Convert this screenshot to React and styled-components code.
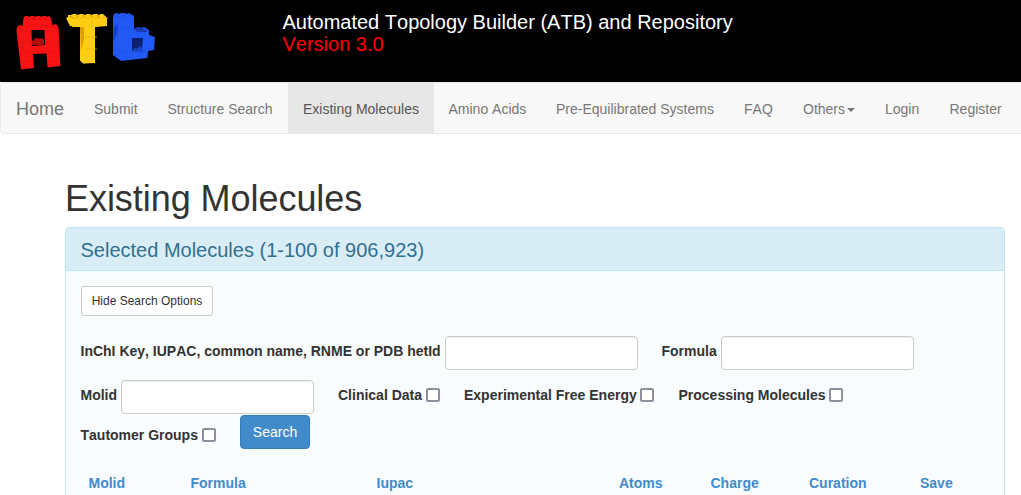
import React from "react";
import styled, { createGlobalStyle } from "styled-components";

const Global = createGlobalStyle`
  *, *::before, *::after { box-sizing: border-box; }
  html, body { margin: 0; overflow: hidden; background: #fff; }
  body { font: 14px/20px "Liberation Sans", Arial, sans-serif; color: #333; font-kerning: none; }
`;
const Page = styled.div`height: 495px; overflow: hidden;`;
const Banner = styled.header`display: flex; height: 82px; background: #000;`;
const Logo = styled.svg`display: block; width: 170px; height: 82px; flex: none;`;
const BannerText = styled.div`
  padding: 11px 0 0 112.5px; font-size: 20px; line-height: 22px; color: #fff; white-space: nowrap;
`;
const Version = styled.div`color: #f00;`;
const Navbar = styled.nav`
  display: flex; width: 1030px; height: 52px; background: #f8f8f8;
  border: 1px solid #e7e7e7; border-radius: 4px;
`;
const NavLink = styled.a`
  display: flex; align-items: center; flex: none; width: ${(p) => p.$width}px;
  padding: 2px 0 0 15px; white-space: nowrap; font-size: ${(p) => (p.$brand ? 18 : 14)}px;
  color: ${(p) => (p.$active ? "#555" : "#777")};
  background: ${(p) => (p.$active ? "#e7e7e7" : "transparent")};
`;
const Caret = styled.span`
  margin: 1px 0 0 2px;
  border-top: 4px solid; border-left: 4px solid transparent; border-right: 4px solid transparent;
`;
const Main = styled.main`width: 940px; margin-left: 65px; padding-top: 45px;`;
const Title = styled.h1`
  margin: 0 0 9px; font-size: 36px; line-height: 39px; font-weight: 400; letter-spacing: -0.05px;
`;
const Panel = styled.section`
  height: 400px; background: #f9fcfd; border: 1px solid #bce8f1; border-radius: 4px;
  box-shadow: 0 1px 1px rgba(0, 0, 0, 0.05);
`;
const PanelHeading = styled.h2`
  margin: 0; height: 43px; padding: 11px 14.5px 10px; font-size: 20px; line-height: 22px;
  font-weight: 400; color: #31708f; background: #d9edf7; border-bottom: 1px solid #bce8f1;
  border-radius: 3px 3px 0 0;
`;
const PanelBody = styled.div`padding: 15px 14px;`;
const Button = styled.button`
  display: block; font-family: inherit; font-kerning: none; white-space: nowrap; text-align: center;
  width: ${(p) => (p.$primary ? 70 : 132)}px; height: ${(p) => (p.$primary ? 34 : 30)}px; padding: 0;
  font-size: ${(p) => (p.$primary ? 14 : 12)}px; border-radius: ${(p) => (p.$primary ? 4 : 3)}px;
  color: ${(p) => (p.$primary ? "#fff" : "#333")};
  background: ${(p) => (p.$primary ? "#428bca" : "#fff")};
  border: 1px solid ${(p) => (p.$primary ? "#357ebd" : "#ccc")};
`;
const ToggleRow = styled.div`padding-left: 1px; margin-bottom: 20px;`;
const FormRow = styled.div`
  display: flex; align-items: ${(p) => (p.$top ? "flex-start" : "center")};
  height: 34px; margin-bottom: ${(p) => p.$gap || 0}px;
`;
const Field = styled.label`
  display: flex; align-items: center; flex: none; width: ${(p) => p.$width}px;
  height: ${(p) => p.$height || 34}px; font-weight: 700; white-space: nowrap;
`;
const Caption = styled.span`
  flex: none; width: ${(p) => p.$width}px; padding: 0 0 4px ${(p) => (p.$flush ? 0 : 0.5)}px;
`;
const TextInput = styled.input`
  width: 193px; height: 34px; padding: 6px 12px; border: 1px solid #ccc; border-radius: 4px;
  background: #fff; box-shadow: inset 0 1px 1px rgba(0, 0, 0, 0.075);
`;
const Checkbox = styled.input.attrs({ type: "checkbox" })`
  appearance: none; width: 14px; height: 14px; margin: 0 0 4px; background: #fff;
  border: 2px solid #8f8f9d; border-radius: 2px;
`;
const TableHead = styled.div`
  display: grid; grid-template-columns: 102px 186px 242.5px 91.5px 98.5px 111px 60px;
  padding-left: 8.5px; margin-top: 24px; font-weight: 700; color: #428bca;
`;

const Check = ({ text, captionWidth, width, height, flush }) => (
  <Field $width={width} $height={height}>
    <Caption $width={captionWidth} $flush={flush}>{text}</Caption>
    <Checkbox />
  </Field>
);

const BrickLogo = () => (
  <Logo viewBox="0 0 170 82" role="img" aria-label="ATB">
    <path fill="#f81414" d="M16.500 31L17 27L20 25L22.500 26L23.500 18L25 16H28L29 17L31 16H34L35 17L37 16H40L41 17L43 16H46L47 17L49 16L51 18L52.500 26L54 24L57 25L58.500 28L60.500 66L47.500 67.500L46.500 53.500L33 54L34 68L21 69.500Z" />
    <path fill="#000" d="M31.500 30h13l.5 15-13 1z" />
    <path fill="#b80909" d="M32 45v-4l2-1 1-2h3l1 1 3-1 2 2v5z" />
    <path fill="none" stroke="#e80e0e" strokeWidth=".7" d="M23 26h28M17 32h14M45 31h14M18 42h14M46 42h13M19 52h39M39 45v8M20 61h13M47 61h13" />
    <path fill="none" stroke="#bd0808" strokeWidth=".8" d="M26 18l3 2M32 18l3 2M38 18l3 2M44 18l3 2M18 28l3 2M54 27l3 2" />
    <path fill="#e5aa09" d="M68 16l4 9v2h8v33l5 4V27h12v-1H72z" />
    <path fill="#ffcd12" d="M68 17v-2h3l2-1h3l2 1 2-1h3l2 1 2-1h3l2 1 2-1h3l2 1 2-1h2l2 2 2 2v8l-12 1v36l-12 .5-3-3V27l-10-1-4-8z" />
    <path fill="#df9e0c" d="M80 27h4v13l-3 10z" />
    <path fill="none" stroke="#e9b10d" strokeWidth=".7" d="M73 18h35M92 19v8M85 37h12M85 49h12" />
    <path fill="none" stroke="#b88408" strokeWidth=".9" d="M70 16l3 2M76 15l2 2M83 15l2 2M90 15l2 2M97 15l2 2M104 15l2 2" />
    <path fill="#2258f4" d="M113 17l1-3 3-1 2 1 2-1h4l2 1 2-1 5 3v13l4-2 3 1 3-1 5 3v5l6 2-1 13-6 1-.5 7-26.500 3-8-6z" />
    <path fill="#1840bd" d="M114 27l4-3-1 10-4 8z" />
    <path fill="#173bb1" d="M134 29l3-2 5 1 6 3-1 1h-10z" />
    <path fill="#0a226f" d="M132 38h11l-1 11-2-1-2 3-6 1z" />
    <path fill="#1748cb" d="M132 51l3-3 2 1 3-3 3 3v3h-11z" />
    <path fill="none" stroke="#1d50e8" strokeWidth=".7" d="M114 16l7 2h13M120 28h13M120 40h12M119 52h29" />
    <path fill="none" stroke="#1744bd" strokeWidth=".8" d="M116 14l3 2M122 14l3 2M128 14l3 2" />
  </Logo>
);

const links = [
  ["Submit", 73.5], ["Structure Search", 135.5], ["Existing Molecules", 145.5],
  ["Amino Acids", 107.5], ["Pre-Equilibrated Systems", 188], ["FAQ", 59],
  ["Others", 82], ["Login", 64.5], ["Register", 82],
];

export default function App() {
  return (
    <Page>
      <Global />
      <Banner>
        <BrickLogo />
        <BannerText>Automated Topology Builder (ATB) and Repository<Version>Version 3.0</Version></BannerText>
      </Banner>
      <Navbar>
        <NavLink $brand $width={78}>Home</NavLink>
        {links.map(([name, width]) => (
          <NavLink key={name} $width={width} $active={name === "Existing Molecules"}>
            {name}{name === "Others" && <Caret />}
          </NavLink>
        ))}
      </Navbar>
      <Main>
        <Title>Existing Molecules</Title>
        <Panel>
          <PanelHeading>Selected Molecules (1-100 of 906,923)</PanelHeading>
          <PanelBody>
            <ToggleRow><Button>Hide Search Options</Button></ToggleRow>
            <FormRow $gap={10}>
              <Field $width={581}><Caption $width={365}>InChI Key, IUPAC, common name, RNME or PDB hetId</Caption><TextInput /></Field>
              <Field $width={260}><Caption $width={60}>Formula</Caption><TextInput /></Field>
            </FormRow>
            <FormRow $gap={1}>
              <Field $width={258}><Caption $width={41}>Molid</Caption><TextInput /></Field>
              <Check flush text="Clinical Data" captionWidth={88} width={126} />
              <Check flush text="Experimental Free Energy" captionWidth={176} width={214} />
              <Check text="Processing Molecules" captionWidth={151} width={170} />
            </FormRow>
            <FormRow $top>
              <Check text="Tautomer Groups" captionWidth={122} width={160} height={44} />
              <Button $primary>Search</Button>
            </FormRow>
            <TableHead>
              {["Molid", "Formula", "Iupac", "Atoms", "Charge", "Curation", "Save"].map((name) => <span key={name}>{name}</span>)}
            </TableHead>
          </PanelBody>
        </Panel>
      </Main>
    </Page>
  );
}
